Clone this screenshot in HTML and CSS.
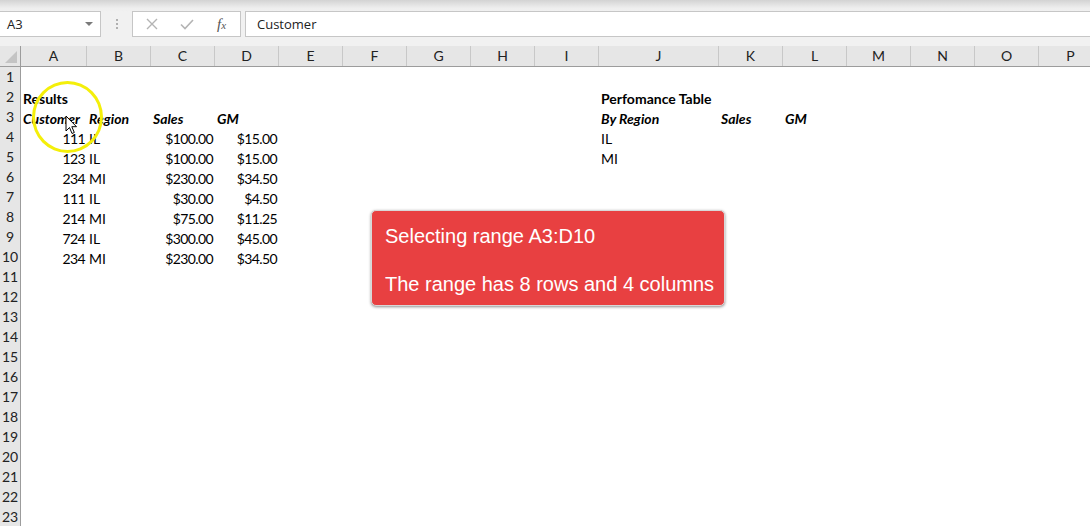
FILE: index.html
```html
<!DOCTYPE html>
<html lang="en">
<head>
<meta charset="UTF-8" />
<title>Book1 - Excel</title>
<link rel="stylesheet" href="styles.css">
</head>
<body>

<div class="app">
  <!-- Formula bar -->
  <header class="formula-bar">
    <div class="name-box">
      <span>A3</span>
      <span class="drop"></span>
    </div>
    <div class="grip"><i></i><i></i><i></i></div>
    <div class="fx-buttons">
      <svg class="ico" width="12" height="12" viewBox="0 0 12 12"><path d="M1 1L11 11M11 1L1 11" stroke="#b4b4b4" stroke-width="1.4" fill="none"/></svg>
      <svg class="ico" width="14" height="11" viewBox="0 0 14 11"><path d="M1 5.5L5 9.5L13 1" stroke="#b4b4b4" stroke-width="1.6" fill="none"/></svg>
      <span class="fx">f<small>x</small></span>
    </div>
    <div class="formula-input">Customer</div>
  </header>

  <!-- Sheet -->
  <div class="sheet">
    <div class="row col-head">
      <div class="corner"><span class="tri"></span></div>
      <div>A</div><div>B</div><div>C</div><div>D</div><div>E</div><div>F</div><div>G</div><div>H</div>
      <div>I</div><div>J</div><div>K</div><div>L</div><div>M</div><div>N</div><div>O</div><div>P</div>
    </div>

    <div class="row"><div class="rh">1</div></div>
    <div class="row">
      <div class="rh">2</div>
      <div class="cell ca b">Results</div>
      <div class="cell cj b">Perfomance Table</div>
    </div>
    <div class="row">
      <div class="rh">3</div>
      <div class="cell ca bi">Customer</div>
      <div class="cell cb bi">Region</div>
      <div class="cell cc bi">Sales</div>
      <div class="cell cd bi">GM</div>
      <div class="cell cj bi">By Region</div>
      <div class="cell ck bi">Sales</div>
      <div class="cell cl bi">GM</div>
    </div>
    <div class="row">
      <div class="rh">4</div>
      <div class="cell ca num">111</div><div class="cell cb">IL</div>
      <div class="cell cc num">$100.00</div><div class="cell cd num">$15.00</div>
      <div class="cell cj">IL</div>
    </div>
    <div class="row">
      <div class="rh">5</div>
      <div class="cell ca num">123</div><div class="cell cb">IL</div>
      <div class="cell cc num">$100.00</div><div class="cell cd num">$15.00</div>
      <div class="cell cj">MI</div>
    </div>
    <div class="row">
      <div class="rh">6</div>
      <div class="cell ca num">234</div><div class="cell cb">MI</div>
      <div class="cell cc num">$230.00</div><div class="cell cd num">$34.50</div>
    </div>
    <div class="row">
      <div class="rh">7</div>
      <div class="cell ca num">111</div><div class="cell cb">IL</div>
      <div class="cell cc num">$30.00</div><div class="cell cd num">$4.50</div>
    </div>
    <div class="row">
      <div class="rh">8</div>
      <div class="cell ca num">214</div><div class="cell cb">MI</div>
      <div class="cell cc num">$75.00</div><div class="cell cd num">$11.25</div>
    </div>
    <div class="row">
      <div class="rh">9</div>
      <div class="cell ca num">724</div><div class="cell cb">IL</div>
      <div class="cell cc num">$300.00</div><div class="cell cd num">$45.00</div>
    </div>
    <div class="row">
      <div class="rh">10</div>
      <div class="cell ca num">234</div><div class="cell cb">MI</div>
      <div class="cell cc num">$230.00</div><div class="cell cd num">$34.50</div>
    </div>
    <div class="row"><div class="rh">11</div></div>
    <div class="row"><div class="rh">12</div></div>
    <div class="row"><div class="rh">13</div></div>
    <div class="row"><div class="rh">14</div></div>
    <div class="row"><div class="rh">15</div></div>
    <div class="row"><div class="rh">16</div></div>
    <div class="row"><div class="rh">17</div></div>
    <div class="row"><div class="rh">18</div></div>
    <div class="row"><div class="rh">19</div></div>
    <div class="row"><div class="rh">20</div></div>
    <div class="row"><div class="rh">21</div></div>
    <div class="row"><div class="rh">22</div></div>
    <div class="row"><div class="rh">23</div></div>
  </div>

  <!-- Overlays -->
  <div class="click-ring"></div>
  <svg class="pointer" width="13" height="20" viewBox="0 0 13 20">
    <path d="M1 1L1 16L4.5 12.5L7 18.5L9.3 17.5L6.8 11.7L11.5 11.7Z" fill="#fff" stroke="#000" stroke-width="1" stroke-linejoin="round"/>
  </svg>

  <div class="toast">
    <p>Selecting range A3:D10</p>
    <p>The range has 8 rows and 4 columns</p>
  </div>
</div>

</body>
</html>
```

FILE: styles.css
```css
body {
  margin: 0;
  background: #fff;
  color: #000;
  overflow: hidden;
  font-family: Lato, "Open Sans", sans-serif;
}
.app {
  position: relative;
  width: 1090px;
  height: 526px;
  overflow: hidden;
}

/* Formula bar */
.formula-bar {
  height: 46px;
  box-sizing: border-box;
  padding-top: 11px;
  display: flex;
  align-items: flex-start;
  background: linear-gradient(#d3d3d3 0, #eeeeee 8px, #f1f1f1 12px, #f1f1f1 100%);
  font-family: "Open Sans", "Noto Sans", sans-serif;
  font-size: 13px;
  color: #222;
}
.name-box {
  width: 101px; height: 26px;
  box-sizing: border-box;
  background: #fff;
  border: 1px solid #c6c6c6; border-left: none;
  display: flex; align-items: center; justify-content: space-between;
  padding: 0 7px 0 7px;
}
.drop {
  width: 0; height: 0;
  border-left: 4px solid transparent;
  border-right: 4px solid transparent;
  border-top: 4px solid #7a7a7a;
}
.grip {
  width: 31px; height: 26px;
  display: flex; flex-direction: column; align-items: center; justify-content: center; gap: 2px;
}
.grip i {
  display: block; width: 2px; height: 2px; background: #b0b0b0;
}
.fx-buttons {
  width: 109px; height: 26px;
  box-sizing: border-box;
  background: #fff;
  border: 1px solid #c6c6c6;
  display: flex; align-items: center;
  padding-left: 13px;
}
.fx-buttons .ico + .ico { margin-left: 22px; }
.fx {
  margin-left: 23px;
  font-family: "Liberation Serif", serif;
  font-style: italic;
  font-size: 15px;
  color: #555;
}
.fx small { font-size: 11px; }
.formula-input {
  flex: 1;
  margin-left: 4px;
  height: 26px;
  box-sizing: border-box;
  background: #fff;
  border: 1px solid #c6c6c6; border-right: none;
  padding-left: 11px;
  line-height: 24px;
  font-size: 13px;
}

/* Sheet grid */
.row {
  display: grid;
  grid-template-columns: 21px 66px repeat(8, 64px) 120px repeat(6, 64px);
  width: max-content;
  height: 20px;
  font-size: 14px;
  line-height: 20px;
}
.col-head {
  height: 21px;
  background: #e6e6e6;
  border-bottom: 1px solid #9c9c9c;
  box-sizing: border-box;
  text-align: center;
  color: #222;
}
.col-head > div {
  border-right: 1px solid #c8c8c8;
  box-sizing: border-box;
}
.corner {
  position: relative;
  border-right: 1px solid #9c9c9c !important;
}
.corner .tri {
  position: absolute;
  right: 3px; bottom: 3px;
  width: 0; height: 0;
  border-left: 12px solid transparent;
  border-bottom: 12px solid #c4c4c4;
}
.rh {
  grid-column: 1;
  background: #e6e6e6;
  border-right: 1px solid #9c9c9c;
  border-bottom: 1px solid #cbcbcb;
  box-sizing: border-box;
  text-align: center;
  line-height: 20px;
  color: #222;
}
.cell {
  padding: 0 2px;
  line-height: 23px;
  white-space: nowrap;
  overflow: visible;
}
.ca { grid-column: 2; }
.cb { grid-column: 3; }
.cc { grid-column: 4; }
.cd { grid-column: 5; }
.cj { grid-column: 11; }
.ck { grid-column: 12; }
.cl { grid-column: 13; }
.num { text-align: right; letter-spacing: -0.6px; }
.b { font-weight: 700; }
.bi { font-weight: 700; font-style: italic; }

/* Overlays */
.click-ring {
  position: absolute;
  left: 32px; top: 81px;
  width: 71px; height: 72px;
  box-sizing: border-box;
  border: 3px solid #f4ef0a;
  border-radius: 50%;
}
.pointer {
  position: absolute;
  left: 65px; top: 115px;
}
.toast {
  position: absolute;
  left: 371px; top: 210px;
  width: 354px;
  box-sizing: border-box;
  padding: 13px 10px 9px 13px;
  background: #e84041;
  border: 1px solid #d8d8d8;
  border-radius: 5px;
  box-shadow: 0 1px 3px rgba(0,0,0,0.45);
  color: #fff;
  font-family: "Liberation Sans", Arial, sans-serif;
  font-size: 20px;
  line-height: 24px;
  white-space: nowrap;
}
.toast p { margin: 0; }
.toast p + p { margin-top: 24px; }
```
